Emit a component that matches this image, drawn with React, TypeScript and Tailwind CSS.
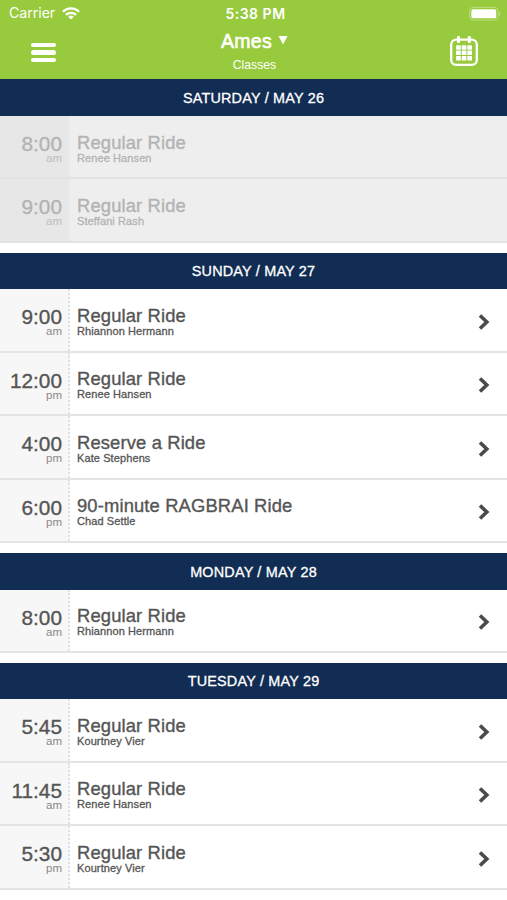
import React from 'react';

interface RideClass {
    time: string;
    period: 'am' | 'pm';
    title: string;
    instructor: string;
}

interface Day {
    label: string;
    past?: boolean;
    classes: RideClass[];
}

const days: Day[] = [
    {
        label: 'SATURDAY / MAY 26',
        past: true,
        classes: [
            { time: '8:00', period: 'am', title: 'Regular Ride', instructor: 'Renee Hansen' },
            { time: '9:00', period: 'am', title: 'Regular Ride', instructor: 'Steffani Rash' },
        ],
    },
    {
        label: 'SUNDAY / MAY 27',
        classes: [
            { time: '9:00', period: 'am', title: 'Regular Ride', instructor: 'Rhiannon Hermann' },
            { time: '12:00', period: 'pm', title: 'Regular Ride', instructor: 'Renee Hansen' },
            { time: '4:00', period: 'pm', title: 'Reserve a Ride', instructor: 'Kate Stephens' },
            { time: '6:00', period: 'pm', title: '90-minute RAGBRAI Ride', instructor: 'Chad Settle' },
        ],
    },
    {
        label: 'MONDAY / MAY 28',
        classes: [
            { time: '8:00', period: 'am', title: 'Regular Ride', instructor: 'Rhiannon Hermann' },
        ],
    },
    {
        label: 'TUESDAY / MAY 29',
        classes: [
            { time: '5:45', period: 'am', title: 'Regular Ride', instructor: 'Kourtney Vier' },
            { time: '11:45', period: 'am', title: 'Regular Ride', instructor: 'Renee Hansen' },
            { time: '5:30', period: 'pm', title: 'Regular Ride', instructor: 'Kourtney Vier' },
        ],
    },
];

const WifiIcon = () => (
    <svg width="18" height="13" viewBox="0 0 18 13" fill="none" stroke="#fff" strokeWidth="2.3">
        <path d="M1 4.7a11.3 11.3 0 0 1 16 0" />
        <path d="M4 7.9a7 7 0 0 1 10 0" />
        <path d="M9 12.6 6.3 9.9a3.8 3.8 0 0 1 5.4 0Z" fill="#fff" stroke="none" />
    </svg>
);

const BatteryIcon = () => (
    <svg width="33" height="14" viewBox="0 0 33 14" fill="none">
        <rect x="0.5" y="0.5" width="28.5" height="12.6" rx="3.2" stroke="#fff" strokeOpacity="0.35" />
        <rect x="2.3" y="2.3" width="24.9" height="9" rx="1.6" fill="#fff" />
        <path d="M30.2 4.6c1.3.6 1.3 3.8 0 4.4Z" fill="#fff" fillOpacity="0.5" />
    </svg>
);

const CalendarIcon = () => (
    <svg width="28" height="31" viewBox="0 0 28 31" fill="#fff">
        <rect x="1.2" y="3.7" width="25.6" height="25.2" rx="5" fill="none" stroke="#fff" strokeWidth="2.3" />
        <rect x="7" y="0" width="3" height="7" rx="1" />
        <rect x="17.8" y="0" width="3" height="7" rx="1" />
        {[9.2, 14.6, 20].map((y) =>
            [6.1, 11.7, 17.3].map((x) => <rect key={`${x}-${y}`} x={x} y={y} width="4.7" height="4.5" rx="0.5" />)
        )}
    </svg>
);

const Header = () => (
    <header className="h-[79.4px] bg-[#98ca3d] text-white">
        <div className="grid h-[27px] grid-cols-[1fr_auto_1fr] items-center pl-[9px] pr-[5px] font-['Inter',sans-serif]">
            <div className="flex items-center gap-[7px]">
                <span className="text-[14.2px] leading-none tracking-[-0.05px]">Carrier</span>
                <WifiIcon />
            </div>
            <span className="text-[14px] font-semibold leading-none tracking-[0.5px]">5:38 PM</span>
            <div className="flex justify-end">
                <BatteryIcon />
            </div>
        </div>
        <div className="grid grid-cols-[1fr_auto_1fr] pl-[31px] pr-[29px]">
            <button type="button" aria-label="Menu" className="mt-[16px] flex w-[25px] flex-col gap-[3px] self-start">
                <span className="h-[4.3px] rounded-full bg-white"></span>
                <span className="h-[4.3px] rounded-full bg-white"></span>
                <span className="h-[4.3px] rounded-full bg-white"></span>
            </button>
            <div className="flex flex-col items-center pt-[3px]">
                <div className="flex items-center gap-[6px]">
                    <h1 className="text-[19.5px] leading-[22px] tracking-[0.3px] [-webkit-text-stroke:0.6px_white]">Ames</h1>
                    <svg width="10" height="9" viewBox="0 0 10 9" fill="#fff" className="mb-[2px]">
                        <path d="M0.5 0h9L5 8.6Z" />
                    </svg>
                </div>
                <p className="mt-[6px] text-[12.2px] leading-[14px]">Classes</p>
            </div>
            <div className="mt-[9px] flex justify-end">
                <CalendarIcon />
            </div>
        </div>
    </header>
);

const ClassRow: React.FC<{ item: RideClass; past?: boolean }> = ({ item, past }) => (
    <li
        className={`flex h-[63.5px] border-b-2 ${
            past ? 'border-[#e3e3e3] bg-[#eeeeee] text-[#b3b3b3]' : 'border-[#e4e4e4] bg-white text-[#555555]'
        }`}
    >
        <div
            className={`w-[70px] shrink-0 pt-[17px] text-right ${
                past ? 'border-r border-[#ececec] bg-[#e7e7e7] pr-[7px]' : 'border-r-2 border-dotted border-[#e2e2e2] bg-[#f7f7f7] pr-[6px]'
            }`}
        >
            <div className="text-[20.8px] leading-[21px] [-webkit-text-stroke:0.35px_currentColor]">{item.time}</div>
            <div className={`text-[11.5px] leading-[8px] ${past ? 'text-[#bdbdbd]' : 'text-[#888888]'}`}>
                {item.period}
            </div>
        </div>
        <div className="grow pl-[7px] pt-[15.6px]">
            <div className="text-[18.4px] leading-[21px] tracking-[0.13px] [-webkit-text-stroke:0.35px_currentColor]">{item.title}</div>
            <div className="-mt-px text-[11px] leading-[12px] tracking-[0.1px] [-webkit-text-stroke:0.3px_currentColor]">{item.instructor}</div>
        </div>
        {!past && (
            <svg width="12" height="16" viewBox="0 0 12 16" fill="none" stroke="#4a4a4a" strokeWidth="3.6" className="mr-[17px] mt-[24.4px]">
                <path d="M2 1.5 8.8 8 2 14.5" />
            </svg>
        )}
    </li>
);

const App: React.FC = () => {
    return (
        <div className="h-[900px] w-full overflow-hidden bg-white font-['Liberation_Sans',Arial,sans-serif]">
            <Header />
            <main className="flex flex-col gap-[9.7px]">
                {days.map((day) => (
                    <section key={day.label}>
                        <h2 className="flex h-[36.6px] items-center justify-center bg-[#122d53] pt-[2.4px] text-[14.4px] tracking-[0.2px] text-white [-webkit-text-stroke:0.3px_white]">
                            {day.label}
                        </h2>
                        <ul>
                            {day.classes.map((item) => (
                                <ClassRow key={item.time + item.period} item={item} past={day.past} />
                            ))}
                        </ul>
                    </section>
                ))}
            </main>
        </div>
    );
};

export default App;
